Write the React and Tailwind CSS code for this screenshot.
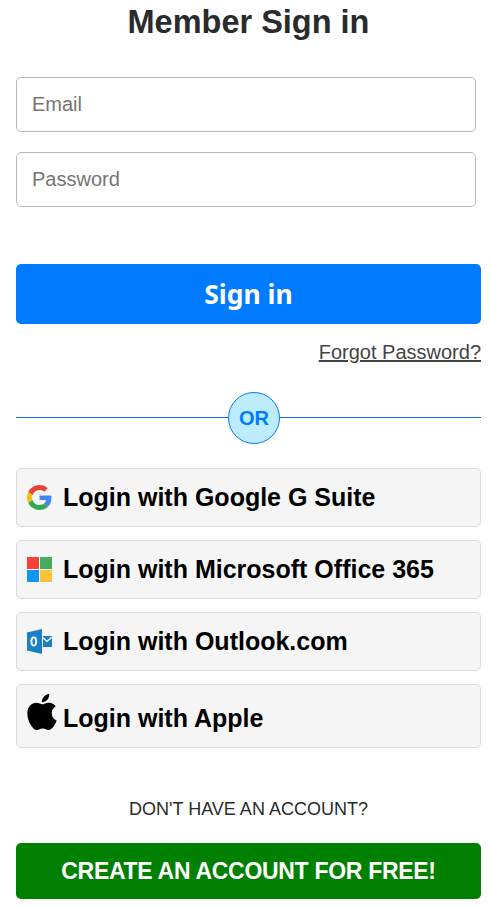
import { useState } from 'react';

function GoogleIcon() {
    return (
        <svg viewBox="0 0 48 48" className="w-[25px] h-[25px] shrink-0">
            <path fill="#EA4335" d="M24 9.5c3.54 0 6.71 1.22 9.21 3.6l6.85-6.85C35.9 2.38 30.47 0 24 0 14.62 0 6.51 5.38 2.56 13.22l7.98 6.19C12.43 13.72 17.74 9.5 24 9.5z" />
            <path fill="#4285F4" d="M46.98 24.55c0-1.57-.15-3.09-.38-4.55H24v9.02h12.94c-.58 2.96-2.26 5.48-4.78 7.18l7.73 6c4.51-4.18 7.09-10.36 7.09-17.65z" />
            <path fill="#FBBC05" d="M10.53 28.59c-.48-1.45-.76-2.99-.76-4.59s.27-3.14.76-4.59l-7.98-6.19C.92 16.46 0 20.12 0 24c0 3.88.92 7.54 2.56 10.78l7.97-6.19z" />
            <path fill="#34A853" d="M24 48c6.48 0 11.93-2.13 15.89-5.81l-7.73-6c-2.15 1.45-4.92 2.3-8.16 2.3-6.26 0-11.57-4.22-13.47-9.91l-7.98 6.19C6.51 42.62 14.62 48 24 48z" />
        </svg>
    );
}

function MicrosoftIcon() {
    return (
        <svg viewBox="0 0 25 25" className="w-[25px] h-[25px] shrink-0">
            <rect x="0" y="0" width="12" height="12" fill="#F44336" />
            <rect x="13" y="0" width="12" height="12" fill="#43AE62" />
            <rect x="0" y="13" width="12" height="12" fill="#0F97F3" />
            <rect x="13" y="13" width="12" height="12" fill="#FFC13A" />
        </svg>
    );
}

function OutlookIcon() {
    return (
        <svg viewBox="0 0 25 25" className="w-[25px] h-[25px] shrink-0">
            <path fill="#1A80C4" d="M0 3.4 15 0v25L0 21.6z" />
            <path fill="#1A80C4" d="M16 7h9v11h-9z" />
            <path fill="#FFFFFF" d="M6.8 7.6c-2.2 0-3.4 2-3.4 4.9s1.2 4.9 3.4 4.9 3.4-2 3.4-4.9-1.2-4.9-3.4-4.9zm0 1.7c1 0 1.4 1.3 1.4 3.2s-.4 3.2-1.4 3.2-1.4-1.3-1.4-3.2.4-3.2 1.4-3.2z" />
            <path fill="none" stroke="#FFFFFF" strokeWidth="1.3" d="M16 8.8l4 3.6 4.8-4.2" />
        </svg>
    );
}

function AppleIcon() {
    return (
        <svg viewBox="0 0 814 1000" className="w-[30px] h-[36px] shrink-0">
            <path fill="#000000" d="M788.1 340.9c-5.8 4.5-108.2 62.2-108.2 190.5 0 148.4 130.3 200.9 134.2 202.2-.6 3.2-20.7 71.9-68.7 141.9-42.8 61.6-87.5 123.1-155.5 123.1s-85.5-39.5-164-39.5c-76.5 0-103.7 40.8-165.9 40.8s-105.6-57-155.5-127C46.7 790.7 0 663 0 541.8c0-194.4 126.4-297.5 250.8-297.5 66.1 0 121.2 43.4 162.7 43.4 39.5 0 101.1-46 176.3-46 28.5 0 130.9 2.6 198.3 99.2zm-234-181.5c31.1-36.9 53.1-88.1 53.1-139.3 0-7.1-.6-14.3-1.9-20.1-50.6 1.9-110.8 33.7-147.1 75.8-28.5 32.4-55.1 83.6-55.1 135.5 0 7.8 1.3 15.6 1.9 18.1 3.2.6 8.4 1.3 13.6 1.3 45.4 0 102.5-30.4 135.5-71.3z" />
        </svg>
    );
}

const logins = [
    { label: 'Login with Google G Suite', icon: <GoogleIcon /> },
    { label: 'Login with Microsoft Office 365', icon: <MicrosoftIcon /> },
    { label: 'Login with Outlook.com', icon: <OutlookIcon /> },
];

export default function App() {
    const [email, setEmail] = useState('');
    const [password, setPassword] = useState('');

    return (
        <div className="w-[491px] h-[907px] overflow-hidden bg-white pl-4 pr-[10px] font-['Liberation_Sans',Arial,sans-serif]">
            <h1 className="text-center text-[32.5px] leading-[45px] font-bold text-[#292b2c]">Member Sign in</h1>

            <form className="mt-[32px]" onSubmit={(e) => e.preventDefault()}>
                <input
                    type="email"
                    placeholder="Email"
                    value={email}
                    onChange={(e) => setEmail(e.target.value)}
                    className="block w-[460px] h-[55px] pl-[15px] pr-4 rounded-[5px] border border-[#b9b9b9] bg-white text-xl text-[#292b2c] placeholder:text-[#757575] outline-none"
                />
                <input
                    type="password"
                    placeholder="Password"
                    value={password}
                    onChange={(e) => setPassword(e.target.value)}
                    className="mt-5 block w-[460px] h-[55px] pl-[15px] pr-4 rounded-[5px] border border-[#b9b9b9] bg-white text-xl text-[#292b2c] placeholder:text-[#757575] outline-none"
                />
                <button type="submit" className="mt-[57px] block w-full h-[60px] pt-[2px] rounded-[5px] bg-[#007bff] text-white text-[26.5px] font-bold font-['Noto_Sans',Tahoma,sans-serif]">
                    Sign in
                </button>
            </form>

            <div className="mt-[15px] text-right text-xl leading-[26px]">
                <a href="#" className="text-[#444444] underline">Forgot Password?</a>
            </div>

            <div className="mt-[27px] flex items-start">
                <div className="mt-[25px] w-[212px] h-px bg-[#0d6efd]" />
                <div className="w-[52px] h-[52px] rounded-full border border-[#007bff] bg-[#bdecff] flex items-center justify-center text-xl font-bold text-[#007bff]">OR</div>
                <div className="mt-[25px] flex-1 h-px bg-[#0d6efd]" />
            </div>

            <div className="mt-[24px] flex flex-col gap-[13px]">
                {logins.map((item) => (
                    <a key={item.label} href="#" className="h-[59px] flex items-center gap-[11px] pl-[10px] rounded-[5px] border border-[#dcdcdc] bg-[#f5f5f5] text-[25px] font-bold text-black">
                        {item.icon}
                        {item.label}
                    </a>
                ))}
                <a href="#" className="h-[64px] flex items-start gap-[6px] pl-[10px] pt-[9px] rounded-[5px] border border-[#dcdcdc] bg-[#f5f5f5] text-[25px] font-bold text-black">
                    <AppleIcon />
                    <span className="mt-[6px]">Login with Apple</span>
                </a>
            </div>

            <p className="mt-[50px] text-center text-lg leading-[22px] text-[#292b2c]">DON'T HAVE AN ACCOUNT?</p>

            <a href="#" className="mt-[23px] flex items-center justify-center h-[56px] rounded-[5px] bg-[#008000] text-white text-[23px] tracking-[-0.3px] font-bold">
                CREATE AN ACCOUNT FOR FREE!
            </a>
        </div>
    );
}
